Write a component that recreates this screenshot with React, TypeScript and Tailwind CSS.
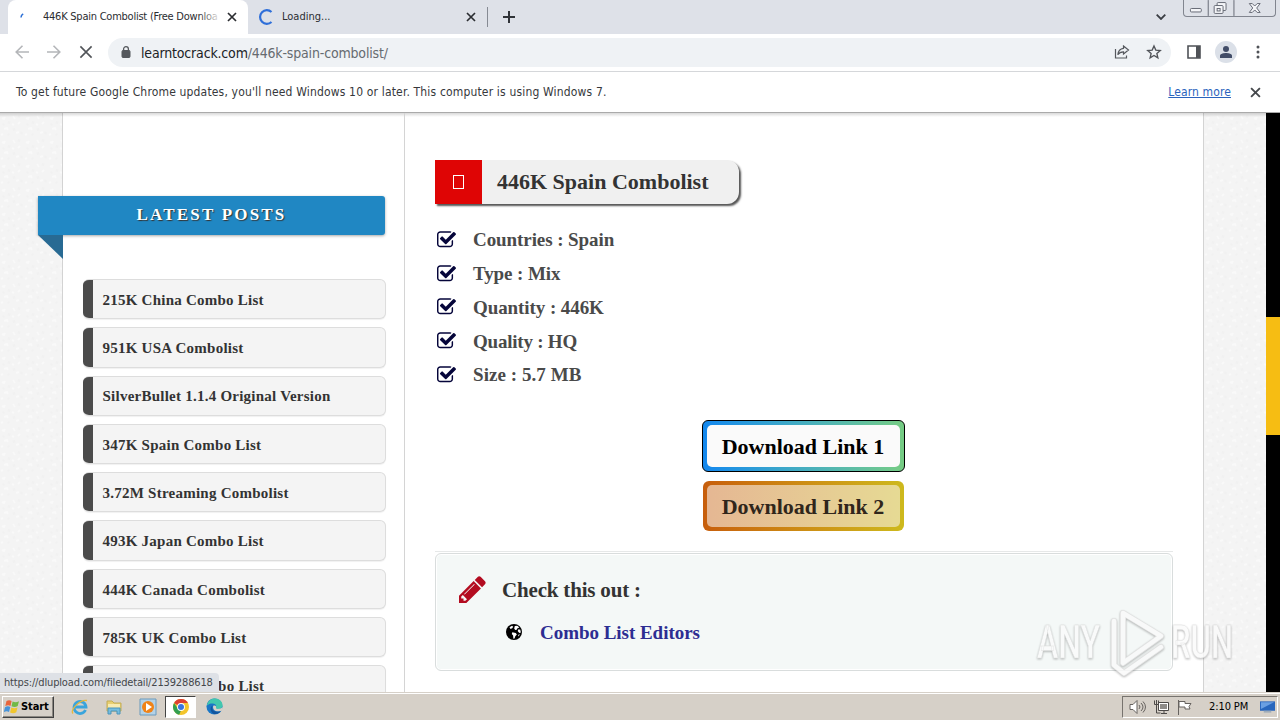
import type { ReactNode } from "react"

const posts = [
  "215K China Combo List",
  "951K USA Combolist",
  "SilverBullet 1.1.4 Original Version",
  "347K Spain Combo List",
  "3.72M Streaming Combolist",
  "493K Japan Combo List",
  "444K Canada Combolist",
  "785K UK Combo List",
  "592K Korea Combo List",
]

const details = [
  { text: "Countries : Spain", spacing: "tracking-[-0.08px]" },
  { text: "Type : Mix", spacing: "tracking-[-0.1px]" },
  { text: "Quantity : 446K", spacing: "tracking-[-0.08px]" },
  { text: "Quality : HQ", spacing: "tracking-[-0.22px]" },
  { text: "Size : 5.7 MB", spacing: "tracking-[0.06px]" },
]

function CrossIcon({ className, thin }: { className: string; thin?: boolean }) {
  return (
    <svg viewBox="0 0 10 10" className={className} fill="none" stroke="currentColor">
      <path d="M1 1l8 8M9 1L1 9" strokeWidth={thin ? 1.15 : 1.7} />
    </svg>
  )
}

function CheckIcon() {
  return (
    <svg viewBox="64 128 1664 1536" className="ml-0.5 w-[19px] h-[18px] shrink-0 text-[#05053a]" fill="currentColor">
      <path d="M1472 930v318q0 119-84.5 203.5t-203.5 84.5h-832q-119 0-203.5-84.5t-84.5-203.5v-832q0-119 84.5-203.5t203.5-84.5h832q63 0 117 25 15 7 18 23 3 17-9 29l-49 49q-10 10-23 10-3 0-9-2-23-6-45-6h-832q-66 0-113 47t-47 113v832q0 66 47 113t113 47h832q66 0 113-47t47-113v-254q0-13 9-22l64-64q10-10 23-10 6 0 12 3 20 8 20 29zm231-489l-814 814q-24 24-57 24t-57-24l-430-430q-24-24-24-57t24-57l110-110q24-24 57-24t57 24l263 263 647-647q24-24 57-24t57 24l110 110q24 24 24 57t-24 57z" />
    </svg>
  )
}

function TabStrip() {
  return (
    <div className="relative flex h-[34px] bg-[#dee1e8] text-[11px] text-[#2b2d31]">
      <div className="ml-2 w-[240px] flex items-center rounded-t-lg bg-white">
        <svg viewBox="0 0 6 6" className="ml-[11px] mb-1 w-1.5 h-1.5" fill="none">
          <path d="M2 5.500C2 4 3 2.500 4.200 1.800" stroke="#2b6fd6" strokeWidth="1.500" />
        </svg>
        <div className="relative ml-[18px] w-[176px] overflow-hidden whitespace-nowrap tracking-[-0.24px]">
          446K Spain Combolist (Free Downloa
          <span className="absolute right-0 top-0 h-full w-5 bg-gradient-to-r from-transparent to-white/90" />
        </div>
        <CrossIcon className="ml-2 w-[10px] h-[10px]" />
      </div>
      <div className="w-[239px] flex items-center">
        <svg viewBox="0 0 16 16" className="ml-[10px] w-4 h-4" fill="none">
          <path d="M13.500 3A6.800 6.800 0 1 0 13.500 13" stroke="#2f6fd9" strokeWidth="2.200" />
        </svg>
        <span className="ml-2 w-[184px]">Loading...</span>
        <CrossIcon className="w-[10px] h-[10px]" />
      </div>
      <div className="mt-[7px] h-5 w-px bg-[#868a93]" />
      <svg viewBox="0 0 12 12" className="ml-[15px] mt-[11px] w-3 h-3" fill="none" stroke="#303338">
        <path d="M6 0v12M0 6h12" strokeWidth="2" />
      </svg>
      <svg viewBox="0 0 10 6" className="ml-auto mr-[17px] mt-[14px] w-[10px] h-[6px]" fill="none" stroke="#3b3e44">
        <path d="M.7.700L5 5 9.300.700" strokeWidth="1.800" />
      </svg>
      <div className="mr-1 w-[93px] h-[17px] flex rounded-b border border-t-0 border-[#81858f] text-[#676b76]">
        <svg viewBox="0 0 92 16" className="w-full h-full" fill="#f4f5f8" stroke="currentColor">
          <path d="M24.500 0v16M50.500 0v16" />
          <rect x="6.500" y="8.500" width="11" height="3.500" rx="1" />
          <rect x="33.500" y="2.500" width="9" height="8" rx="1" />
          <rect x="30.500" y="5.500" width="9" height="8" rx="1" />
          <rect x="33.500" y="8.500" width="3" height="2.500" />
          <path d="M66 3.500h3l2.500 2.500L74 3.500h3L73.500 8l3.500 4.500h-3L71.500 10 69 12.500h-3L69.500 8z" />
        </svg>
      </div>
    </div>
  )
}

function Toolbar() {
  return (
    <div className="flex h-[38px] items-center border-b border-[#d5d7da] bg-white pb-px">
      <svg viewBox="0 0 14 14" className="ml-[15px] w-[14px] h-[14px]" fill="none" stroke="#b4b6b9" strokeWidth="1.600">
        <path d="M14 7H1M7.500.700L1.200 7l6.300 6.300" />
      </svg>
      <svg viewBox="0 0 14 14" className="ml-[18px] w-[14px] h-[14px]" fill="none" stroke="#b4b6b9" strokeWidth="1.600">
        <path d="M0 7h13M6.500.700L12.800 7l-6.300 6.300" />
      </svg>
      <CrossIcon thin className="ml-[18px] w-[14px] h-[14px] text-[#515459]" />
      <div className="ml-[15px] flex h-[29px] w-[1063px] items-center rounded-full bg-[#eff2f5]">
        <svg viewBox="0 0 10 12" className="ml-[13px] w-[10px] h-3" fill="none">
          <rect x="1" y="4.500" width="8" height="7" rx="1" fill="#55585d" stroke="#55585d" />
          <path d="M2.600 5V3.100a2.400 2.400 0 0 1 4.800 0V5" stroke="#55585d" strokeWidth="1.300" />
        </svg>
        <span className="ml-[10px] mt-px text-[14px] leading-none text-[#666b70] tracking-[-0.17px]">
          <span className="text-[#202226]">learntocrack.com</span>/446k-spain-combolist/
        </span>
        <svg viewBox="0 0 16 14" className="ml-auto w-4 h-[14px]" fill="none" stroke="#55585d" strokeWidth="1.200">
          <path d="M1.500 4v9h11v-2.500M9.500 1l5 4-5 4V6.800C7 6.800 5.200 7.500 3.800 9.700 4.200 6 6.300 3.700 9.500 3.300z" />
        </svg>
        <svg viewBox="0 0 24 24" className="ml-4 mr-[9px] w-4 h-4" fill="none" stroke="#505358" strokeWidth="2">
          <path d="M12 3l2.700 6.200 6.700.6-5.100 4.400 1.500 6.600L12 17.300l-5.800 3.500 1.500-6.600-5.100-4.400 6.700-.6z" />
        </svg>
      </div>
      <svg viewBox="0 0 14 14" className="ml-4 w-[14px] h-[14px]">
        <path d="M1 1h12v12H1z" fill="none" stroke="#4f5257" strokeWidth="1.600" />
        <path d="M9 1h4v12H9z" fill="#4f5257" />
      </svg>
      <div className="ml-[14px] flex h-[22px] w-[22px] items-center justify-center rounded-full bg-[#dbe0e8]">
        <svg viewBox="0 0 14 14" className="w-[14px] h-[14px]" fill="#424d68">
          <circle cx="7" cy="4" r="3" />
          <path d="M1 13v-2.200C1 8.800 4.500 8 7 8s6 .8 6 2.800V13z" />
        </svg>
      </div>
      <svg viewBox="0 0 4 14" className="ml-[19px] w-1 h-[14px]" fill="#4f5257">
        <circle cx="2" cy="2" r="1.500" />
        <circle cx="2" cy="7" r="1.500" />
        <circle cx="2" cy="12" r="1.500" />
      </svg>
    </div>
  )
}

function InfoBar() {
  return (
    <div className="flex h-[41px] items-center border-b border-[#aaa] bg-white text-[12px] text-[#36383b]">
      <span className="ml-4 tracking-[0.165px]">
        To get future Google Chrome updates, you'll need Windows 10 or later. This computer is using Windows 7.
      </span>
      <span className="ml-auto mr-[19px] text-[#2a63bd] underline tracking-[0.12px]">Learn more</span>
      <CrossIcon className="mr-[19px] w-[11px] h-[11px] text-[#45484c]" />
    </div>
  )
}

function Gutter({ className }: { className: string }) {
  return (
    <svg className={`h-full shrink-0 ${className}`}>
      <defs>
        <pattern id="speckle" width="24" height="24" patternUnits="userSpaceOnUse">
          <rect width="24" height="24" fill="#f4f4f4" />
          <path d="M2 5l2 1 1-2M13 3l2 3M20 9l-2 2M4 16l3-1 1 2M16 20l3-1M1 22l2-1M12 11l2 1" stroke="#f9f9f9" strokeWidth="2" fill="none" />
          <path d="M8 9l2 1M18 3l2 1M3 12l1-1M13 17l2-1M21 21l1-2M8 21l1 1" stroke="#f1f1f1" strokeWidth="2" fill="none" />
        </pattern>
      </defs>
      <rect width="100%" height="100%" fill="url(#speckle)" />
    </svg>
  )
}

function Sidebar() {
  return (
    <aside className="relative z-10 w-[342px] shrink-0 border-r border-[#d4d4d4] pt-[83px]">
      <div className="-ml-[25px] w-[347px]">
        <h2 className="h-[39px] rounded-r-[3px] bg-[#2087c3] text-center text-[17px] leading-[38px] font-bold tracking-[2.2px] text-white shadow-[0_1px_3px_rgba(0,0,0,0.35)] [text-shadow:1px_1px_1px_#333]">
          LATEST POSTS
        </h2>
        <div className="h-6 w-[25px] bg-[#286a93] [clip-path:polygon(0_0,100%_0,100%_100%)]" />
      </div>
      <ul className="ml-5 mt-5 w-[303px] space-y-2">
        {posts.map((post) => (
          <li
            key={post}
            className="h-[40.300px] rounded-md border border-l-0 border-[#ddd] bg-[#f4f4f4] shadow-[0_1px_1px_rgba(0,0,0,0.06)] flex items-center overflow-hidden"
          >
            <span className="h-full w-[10px] bg-[#4b4b4b]" />
            <a className="ml-[9.500px] pt-0.5 text-[15px] font-bold text-[#333] tracking-[0.24px]">{post}</a>
          </li>
        ))}
      </ul>
    </aside>
  )
}

function DownloadButton({ outer, inner, children }: { outer: string; inner: string; children: ReactNode }) {
  return (
    <a className={`flex rounded-[6px] p-1 ${outer}`}>
      <span className={`flex flex-1 items-center justify-center rounded-[5px] pt-0.5 text-[22px] font-bold ${inner}`}>
        {children}
      </span>
    </a>
  )
}

function Article() {
  return (
    <main className="flex-1 px-[30px] pt-[47px]">
      <div className="flex h-[44px] w-[304px] rounded-br-[12px] rounded-tr-[12px] bg-[#f0f0f0] shadow-[2px_2px_2px_#555]">
        <div className="flex w-[47px] items-center justify-center bg-[#df0505]">
          <span className="h-[14px] w-[11px] border border-white" />
        </div>
        <h1 className="ml-[15px] whitespace-nowrap text-[22px] leading-[44px] font-bold text-[#333]">446K Spain Combolist</h1>
      </div>

      <ul className="mt-[19px]">
        {details.map((d) => (
          <li key={d.text} className="flex h-[33.750px] items-center">
            <CheckIcon />
            <span className={`ml-[17px] text-[19px] leading-none font-bold text-[#4a4a4a] ${d.spacing}`}>{d.text}</span>
          </li>
        ))}
      </ul>

      <div className="mt-7 mr-0.5 flex flex-col items-center gap-[9px]">
        <DownloadButton
          outer="h-[52px] w-[203px] border border-black bg-gradient-to-r from-[#1387ee] to-[#76cc83]"
          inner="bg-[#fafafa] text-black"
        >
          Download Link 1
        </DownloadButton>
        <DownloadButton
          outer="h-[50px] w-[201px] bg-gradient-to-r from-[#c75e0c] to-[#cdb91d]"
          inner="bg-gradient-to-r from-[#e5b793] to-[#e6da94] text-[#30261b]"
        >
          Download Link 2
        </DownloadButton>
      </div>

      <div className="mt-5 border-t border-[#e6e8e8] pt-px">
        <section className="h-[118px] rounded-md border border-[#d9dddd] bg-[#f4f8f7] pl-[23px] pt-[21px] shadow-[inset_0_0_0_1px_#fff]">
          <div className="flex h-[31px] items-center">
            <svg viewBox="128 128 1536 1536" className="mb-0.5 w-[27px] h-[27px] text-[#b30c20]" fill="currentColor">
              <path d="M491 1536l91-91-235-235-91 91v107h128v128h107zm523-928q0-22-22-22-10 0-17 7l-542 542q-7 7-7 17 0 22 22 22 10 0 17-7l542-542q7-7 7-17zm-54-192l416 416-832 832h-416v-416zm683 96q0 53-37 90l-166 166-416-416 166-165q36-38 90-38 53 0 91 38l235 234q37 39 37 91z" />
            </svg>
            <h3 className="ml-4 text-[21px] font-bold text-[#333] tracking-[-0.18px]">Check this out :</h3>
          </div>
          <div className="ml-[47px] mt-3 flex h-[28px] items-center">
            <svg viewBox="0 0 16 16" className="w-4 h-4">
              <circle cx="8" cy="8" r="8" fill="#000" />
              <path d="M3.500 3.200L6 1.700l1.200 1-1 1.600-1.700.8zM8.800 2l2.500-.2 2 1.800-1.800.6-.8 1.500-1.500.2-1-1.500zM12 5.500l2.200 0 .7 3-1.500.4-1.600-1.700zM6.300 8.300l3.400.6 1.200 1.700-1.600 1.700-.8 2.300-1.100.2-.3-3.200-1.300-1.600zM12.700 10.500l1-.4-.7 1.900-1 .3z" fill="#fff" />
            </svg>
            <a className="ml-[18px] pt-0.5 text-[19px] font-bold text-[#2d2d92] tracking-[-0.03px]">Combo List Editors</a>
          </div>
        </section>
      </div>
    </main>
  )
}

function Watermark() {
  return (
    <svg viewBox="0 0 210 74" className="absolute left-[1032px] top-[604px] z-20 w-[210px] h-[74px] opacity-80 [filter:drop-shadow(0_1px_1px_rgba(0,0,0,0.35))]">
      <g fill="#fbfbfb" fontFamily="Roboto, sans-serif" fontSize="46" fontWeight="500" stroke="#ddd" strokeWidth="0.500">
        <text x="5" y="54" textLength="63" lengthAdjust="spacingAndGlyphs">ANY</text>
        <text x="139" y="54" textLength="62" lengthAdjust="spacingAndGlyphs">RUN</text>
      </g>
      <g fill="none" strokeLinejoin="round" strokeLinecap="round">
        <path d="M91 9l38 23-38 27zM82 17v44l10 8 37-26" stroke="#ddd" strokeWidth="6" />
        <path d="M91 9l38 23-38 27zM82 17v44l10 8 37-26" stroke="#fafafa" strokeWidth="4.500" />
      </g>
    </svg>
  )
}

function TaskbarIcons() {
  return (
    <div className="flex items-center">
      <svg viewBox="0 0 18 18" className="ml-[17px] w-[18px] h-[18px]" fill="none">
        <path d="M14.500 12A6 6 0 1 1 15 9H4.500" stroke="#39a4dc" strokeWidth="2.800" />
        <path d="M2 15.500C-1 12 9 1 16 2.500" stroke="#e6b83e" strokeWidth="1.300" />
      </svg>
      <svg viewBox="0 0 18 18" className="ml-4 w-[18px] h-[18px]">
        <path d="M2 3h5l2 2h7v8H2z" fill="#e8cf70" stroke="#c2ac56" />
        <path d="M3 6h12v4H3z" fill="#f8eab0" />
        <path d="M3 10h12v6h-3v-3H6v3H3z" fill="#75bddf" stroke="#4b94bb" />
      </svg>
      <svg viewBox="0 0 18 18" className="ml-4 w-[18px] h-[18px]">
        <path d="M1 1h16v16H1z" fill="#b4d2e7" stroke="#6b9abd" />
        <circle cx="9" cy="9" r="6" fill="#f08318" />
        <path d="M7 5l6 4-6 4z" fill="#fff" />
      </svg>
      <div className="ml-[8px] flex h-[22px] w-[31px] items-center justify-center border border-b-white border-l-[#444] border-r-white border-t-[#444] bg-white">
        <svg viewBox="0 0 18 18" className="w-4 h-4">
          <circle cx="9" cy="9" r="9" fill="#f3c52c" />
          <path d="M9 9L1.200 4.500A9 9 0 0 1 16.800 4.500H9z" fill="#dd4032" />
          <path d="M1.200 4.500L5.500 11l3.500 2-2 4.800A9 9 0 0 1 1.200 4.500z" fill="#339f51" />
          <circle cx="9" cy="9" r="4.400" fill="#fff" />
          <circle cx="9" cy="9" r="3.400" fill="#3975e0" />
        </svg>
      </div>
      <svg viewBox="0 0 18 18" className="ml-[10px] w-[17px] h-[17px]">
        <circle cx="9" cy="9" r="8.500" fill="#1976c6" />
        <path d="M1 8C2 2 7 .3 10 .600c5 .4 7.500 4 7.500 7 0 3-2.500 4-5 4-1.500 0-2.500-.8-1.800-1.800C12 6 5 4 1 8z" fill="#42c7ae" />
        <path d="M7 8c-1.500 3 .5 6.500 4.500 6.500 2 0 3.500-.5 4.500-1.200C13 18 8 18 6 15 4 12 5 9 7 8z" fill="#12559d" />
        <path d="M8 8c2-.5 3 .5 2.700 1.800-.6 1.200.8 1.800 1.800 1.800 1.500 0 4-.5 5-1.800v3.500c-3 1.500-8 1-9.500-1.500-.8-1.500-.7-3 0-3.800z" fill="#d6d0c8" />
      </svg>
    </div>
  )
}

function Taskbar() {
  return (
    <footer className="relative flex h-7 border-t border-[#d6d0c8] bg-[#d6d0c8] shadow-[inset_0_1px_0_#fff] text-black">
      <button className="ml-0.5 mt-[3px] flex h-[22px] w-[52px] items-center border border-b-[#404040] border-l-white border-r-[#404040] border-t-white shadow-[inset_-1px_-1px_0_#8b8781]">
        <svg viewBox="0 0 16 16" className="ml-px w-4 h-4 shrink-0">
          <path d="M2.500 2C4.500.8 6 1 7.600 2L6.500 7C5 6 3.500 6 1.300 7z" fill="#e8653c" />
          <path d="M8.600 2.500c2 1 4 1 6.400-.2L13.700 7c-2 1.200-4 1.200-6.200.2z" fill="#72b946" />
          <path d="M1 8.200C3 7 4.700 7.200 6.300 8L5 13C3.500 12 1.800 12-.2 13z" fill="#4793d9" />
          <path d="M7.300 8.500c2 1 4 1 6.200 0l-1.200 4.700c-2 1.200-4 1.200-6.200.2z" fill="#f1c62e" />
        </svg>
        <span className="ml-px text-[11px] font-bold tracking-[-0.1px]">Start</span>
      </button>
      <TaskbarIcons />
      <div className="ml-auto mr-0.5 mt-[3px] flex h-[22px] w-[156px] items-center border border-b-white border-l-[#77736e] border-r-white border-t-[#77736e]">
        <svg viewBox="0 0 17 16" className="ml-[6px] w-[17px] h-4" fill="#fff" stroke="#66625f">
          <path d="M1 5.500h3l4-4v13l-4-4H1z" />
          <path d="M10 6q2 2 0 4M12 4q4 4 0 8M14 2.500q5 5.500 0 11" fill="none" />
        </svg>
        <svg viewBox="0 0 17 16" className="ml-[7px] w-[17px] h-4" fill="#fff" stroke="#4c4947">
          <path d="M5.500 3.500h10v8h-10zM8 14.500h6M11 12v2" />
          <path d="M7 5h7v5H7z" fill="#8e8b88" stroke="none" />
          <path d="M1.500 1.500v4h4v-4M3.500 1v13h4" fill="none" />
        </svg>
        <svg viewBox="0 0 16 16" className="ml-[7px] w-4 h-4" fill="#fff" stroke="#66625f">
          <path d="M1.500 1v15M2 2.500h6v2h6l-2 3 1 2.500H8V8H2z" />
        </svg>
        <span className="ml-[16px] whitespace-nowrap text-[11px] tracking-[-0.1px]">2:10 PM</span>
        <svg viewBox="0 0 16 14" className="ml-auto mr-0.5 w-[15px] h-[14px]">
          <path d="M0 1h16v10H0z" fill="#2866bd" />
          <path d="M1 2h14L1 9z" fill="#6a9fe2" />
          <path d="M4 11h8v2H4z" fill="#9facb9" />
        </svg>
      </div>
    </footer>
  )
}

export default function App() {
  return (
    <div className="relative h-[720px] w-[1280px] overflow-hidden bg-white font-['DejaVu_Sans_Condensed','DejaVu_Sans',sans-serif]">
      <TabStrip />
      <Toolbar />
      <InfoBar />
      <div className="relative flex h-[579px] overflow-hidden font-['Liberation_Serif',serif]">
        <Gutter className="w-[62px]" />
        <div className="flex w-[1142px] shrink-0 border-x border-[#d3d3d3] bg-white">
          <Sidebar />
          <Article />
        </div>
        <Gutter className="w-[62px]" />
        <div className="w-[14px] bg-black pt-[204px]">
          <div className="h-[118px] bg-[#f6bd13]" />
        </div>
        <div className="absolute inset-x-0 top-0 h-1 bg-gradient-to-b from-black/15 to-transparent" />
      </div>
      <Watermark />
      <div className="absolute left-0 top-[673px] z-20 h-[19px] w-[219px] rounded-tr bg-[#dee1e6] pl-1 text-[11px] leading-[20px] text-[#44474b] tracking-[-0.15px] whitespace-nowrap">
        https://dlupload.com/filedetail/2139288618
      </div>
      <Taskbar />
    </div>
  )
}
